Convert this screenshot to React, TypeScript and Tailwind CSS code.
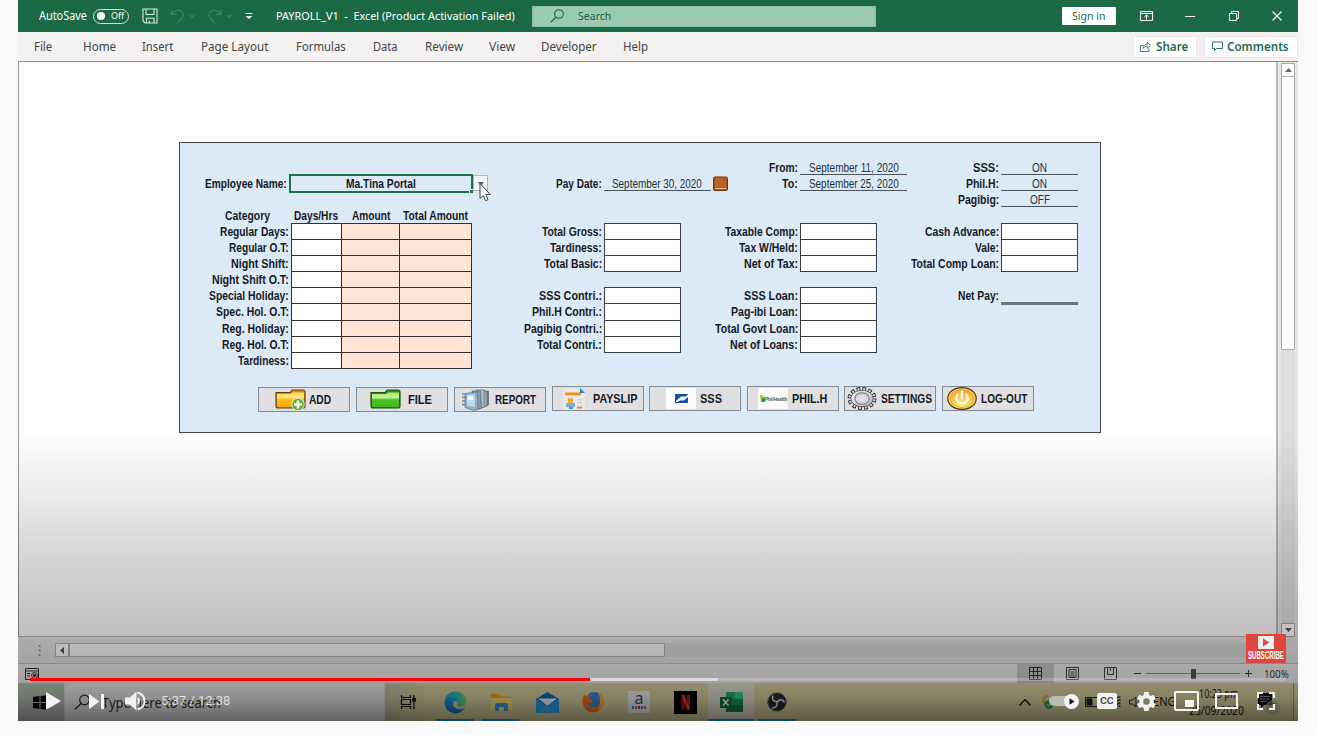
import { useLayoutEffect, useRef, useState } from "react";
import type { ReactNode } from "react";

const UI = "font-['Noto_Sans','Open_Sans',sans-serif]";
const ARIAL = "font-['Liberation_Sans',sans-serif]";

/* Condenses or widens one line of text to an exact width. */
function Fit({ w, className = "", children }: { w: number; className?: string; children: string }) {
  const ref = useRef<HTMLSpanElement>(null);
  const [scale, setScale] = useState(1);
  useLayoutEffect(() => {
    if (ref.current) setScale(w / ref.current.offsetWidth);
  }, [w]);
  return (
    <span className={`block shrink-0 whitespace-nowrap ${className}`} style={{ width: w }}>
      <span ref={ref} className="inline-block origin-left" style={{ transform: `scaleX(${scale})` }}>
        {children}
      </span>
    </span>
  );
}

function TitleBar() {
  return (
    <div className={`flex h-8 shrink-0 items-center bg-[#1b6a45] text-[12px] leading-4 text-white ${UI}`}>
      <Fit w={48} className="ml-[21px]">AutoSave</Fit>
      <div className="ml-[6px] flex h-[15px] w-9 items-center rounded-full border border-[#cfe3d8] pl-[3px]">
        <span className="size-2 rounded-full bg-white" />
        <Fit w={13} className="ml-[6px] text-[9.5px]">Off</Fit>
      </div>
      <svg className="ml-[13px] h-4 w-[16px]" viewBox="0 0 16 16" fill="none" stroke="#d8e9e0" strokeWidth="1.1">
        <path d="M1 1h14v14H3l-2-2zM4 1v5.500h8V1M4.500 15v-4.700H12V15M7.300 12.500V15" />
      </svg>
      <svg className="ml-3 h-4 w-[62px]" viewBox="0 0 62 16" fill="none" stroke="#3f8463" strokeWidth="1.2">
        <path d="M1.500 1.500v5h5M1.800 6.200C5 2 9 1.400 11.700 3.500c3.400 3 1.600 6-4.500 11.500M20 7l2.300 2.200L24.600 7M51 1.500v5h-5M50.700 6.200C47.500 2 43.500 1.400 40.800 3.500c-3.400 3-1.600 6 4 11.500M57 7l2.300 2.200L61.600 7" />
      </svg>
      <svg className="ml-[13px] h-2 w-2" viewBox="0 0 8 8" fill="#e9f3ee"><path d="M.5 1h7v1h-7zM.5 4h7L4 7z" /></svg>
      <Fit w={239} className="ml-[23px] text-[11.5px]">{"PAYROLL_V1\u00a0 -\u00a0 Excel (Product Activation Failed)"}</Fit>
      <div className="ml-[17px] flex h-[21px] w-[344px] items-center border border-[#8cc0a6] bg-[#9bcab3] pl-[17px] text-[#245c41]">
        <svg className="size-[14px]" viewBox="0 0 14 14" fill="none" stroke="#245c41" strokeWidth="1.1"><circle cx="9" cy="5" r="4.3" /><path d="M6 8 .6 13.4" /></svg>
        <Fit w={33} className="ml-[14px] text-[11.5px]">Search</Fit>
      </div>
      <div className="ml-[186px] flex h-[18px] w-[54px] items-center justify-center rounded-[1px] bg-white text-[#1b6a45]">
        <Fit w={34} className="text-[11.5px]">Sign in</Fit>
      </div>
      <svg className="ml-6 h-[10px] w-[13px]" viewBox="0 0 13 10" fill="none" stroke="white"><path d="M.5.5h12v9H.5zM.5 2.500h12M6.500 8.500V4M4.300 6 6.500 4l2.200 2" /></svg>
      <span className="ml-8 h-px w-[10px] bg-white" />
      <svg className="ml-[34px] size-[10px]" viewBox="0 0 10 10" fill="none" stroke="white"><path d="M.5 2.500h7v7h-7zM2.500 2.500v-2h7v7h-2" /></svg>
      <svg className="ml-[33px] size-[10px]" viewBox="0 0 10 10" stroke="white" strokeWidth="1.1"><path d="m.5.5 9 9m0-9-9 9" /></svg>
    </div>
  );
}

const MENU: [string, number, string][] = [
  ["File", 18, "w-[49px]"],
  ["Home", 33, "w-[59px]"],
  ["Insert", 31, "w-[59px]"],
  ["Page Layout", 67, "w-[95px]"],
  ["Formulas", 50, "w-[77px]"],
  ["Data", 25, "w-[52px]"],
  ["Review", 38, "w-[64px]"],
  ["View", 26, "w-[52px]"],
  ["Developer", 56, "w-[82px]"],
  ["Help", 25, "w-[25px]"],
];

function Ribbon() {
  return (
    <div className={`flex h-[30px] shrink-0 items-center border-b border-[#8f8b8b] bg-[#f3f2f1] pl-4 text-[12px] leading-4 text-[#444] ${UI}`}>
      {MENU.map(([name, w, cell]) => (
        <div key={name} className={`shrink-0 ${cell}`}><Fit w={w}>{name}</Fit></div>
      ))}
      <div className="mr-px ml-auto flex gap-[9px] font-semibold text-[#1f6a50]">
        <div className="flex h-5 w-[62px] items-center bg-white pl-[6px] shadow-[0_0_1px_#bbb]">
          <svg className="size-[11px]" viewBox="0 0 11 11" fill="none" stroke="#2b7559" strokeWidth=".9"><path d="M3.500 4.500h-3v6h8.500V7.500M3 7.500c.3-3 2-4.200 4.300-4.200V1l3.200 3.400-3.200 3V5.200C5.300 5.200 4 6 3 7.500z" /></svg>
          <Fit w={32} className="ml-[5px]">Share</Fit>
        </div>
        <div className="flex h-5 w-[92px] items-center bg-white pl-[7px] shadow-[0_0_1px_#bbb]">
          <svg className="size-[11px]" viewBox="0 0 11 11" fill="none" stroke="#2b7559"><path d="M.5 1h10v6.500h-6L2.500 9.700V7.500h-2z" /></svg>
          <Fit w={62} className="ml-[4px]">Comments</Fit>
        </div>
      </div>
    </div>
  );
}

type Entry = [string, number];

/* A run of labels with a ruled box beside each one. */
function BoxRows({ rows, label, tall = false }: { rows: Entry[]; label: string; tall?: boolean }) {
  return (
    <div className="flex flex-col">
      {rows.map(([name, w], i) => (
        <div key={name} className={`flex ${tall && i === 1 ? "h-[17px]" : "h-4"}`}>
          <div className={`flex shrink-0 items-center justify-end pt-px pr-[2px] ${label}`}><Fit w={w}>{name}</Fit></div>
          <div className={`w-[77px] border-x border-t border-[#3b3f42] bg-white ${i === rows.length - 1 ? "-mb-px border-b" : ""}`} />
        </div>
      ))}
    </div>
  );
}

function LineRow({ name, w, label, line, value, vw }: { name: string; w: number; label: string; line: string; value: string; vw: number }) {
  return (
    <div className="flex h-4">
      <div className={`flex shrink-0 items-center justify-end pt-px pr-[2px] ${label}`}><Fit w={w}>{name}</Fit></div>
      <div className={`flex shrink-0 items-center justify-center border-b border-[#4b5358] pt-[2px] font-normal text-[#26323c] ${line}`}>
        <Fit w={vw}>{value}</Fit>
      </div>
    </div>
  );
}

const CATEGORIES: Entry[] = [
  ["Regular Days:", 69], ["Regular O.T:", 60], ["Night Shift:", 58], ["Night Shift O.T:", 77], ["Special Holiday:", 80],
  ["Spec. Hol. O.T:", 73], ["Reg. Holiday:", 67], ["Reg. Hol. O.T:", 67], ["Tardiness:", 51],
];

function CategoryTable() {
  return (
    <div className="flex w-[311px] shrink-0 flex-col pt-8">
      <div className="flex h-4 items-center">
        <Fit w={82} className="ml-[25px] pt-px">Employee Name:</Fit>
        <div className="relative ml-[2px] flex h-[19px] w-[184px] shrink-0 items-center justify-center border-2 border-[#217346] pt-px">
          <Fit w={70}>Ma.Tina Portal</Fit>
          <span className="absolute -right-[3px] -bottom-[3px] size-[5px] border border-[#dce9f6] bg-[#217346]" />
        </div>
        <div className="relative h-4 w-[15px] shrink-0 border border-[#b5b5b5] bg-[#f4f5f6]">
          <svg className="absolute top-1 left-1 h-[25px] w-[13px]" viewBox="0 0 13 25">
            <path d="M0 2h6L3 5.500z" fill="#555" />
            <path d="M2 3.500v15l3.300-3 2.200 5.200 2.500-1-2.200-5.200h4.500z" fill="white" stroke="#26303b" strokeWidth=".9" />
          </svg>
        </div>
      </div>
      <div className="mt-4 flex h-4 items-center pt-px">
        <Fit w={45} className="ml-[45px]">Category</Fit>
        <Fit w={44} className="ml-[24px]">Days/Hrs</Fit>
        <Fit w={38} className="ml-[14px]">Amount</Fit>
        <Fit w={65} className="ml-[13px]">Total Amount</Fit>
      </div>
      {CATEGORIES.map(([name, w], i) => {
        const last = i === CATEGORIES.length - 1 ? "-mb-px border-b" : "";
        return (
          <div key={name} className={`flex ${i === 5 ? "h-[17px]" : "h-4"}`}>
            <div className="flex w-[111px] shrink-0 items-center justify-end pt-px pr-[2px]"><Fit w={w}>{name}</Fit></div>
            <div className={`w-[50px] border-t border-l border-[#332f2d] bg-white ${last}`} />
            <div className={`w-[58px] border-t border-l border-[#332f2d] bg-[#fee4d5] ${last}`} />
            <div className={`w-[73px] border-x border-t border-[#332f2d] bg-[#fee4d5] ${last}`} />
          </div>
        );
      })}
    </div>
  );
}

function FolderIcon({ green = false }: { green?: boolean }) {
  return (
    <svg className="h-[22px] w-[31px] shrink-0" viewBox="0 0 31 22">
      <defs>
        <linearGradient id={green ? "fg" : "fy"} x1="0" y1="0" x2="0" y2="1">
          <stop offset="0" stopColor={green ? "#a5e86a" : "#ffdf62"} /><stop offset=".35" stopColor={green ? "#c6f09a" : "#ffe27a"} /><stop offset=".5" stopColor={green ? "#4fbf26" : "#fdbd19"} /><stop offset="1" stopColor={green ? "#43b91f" : "#f7a60f"} />
        </linearGradient>
      </defs>
      <path d="M1 3.500h14l2-2.500h11.500q1.500 0 1.500 2V17q0 2-2 2H3q-2 0-2-2z" fill={green ? "#239018" : "#e8890f"} stroke={green ? "#1f5216" : "#5e4216"} strokeWidth="1.2" />
      <path d="M2 5h14l2-1.500h11V16q0 2-2 2H4q-2 0-2-2z" fill={`url(#${green ? "fg" : "fy"})`} />
      {!green && (<><circle cx="23" cy="15.500" r="6.200" fill="#64ad3a" stroke="#e4eedd" /><path d="M23 11.500v8m-4-4h8" stroke="white" strokeWidth="2.500" /></>)}
    </svg>
  );
}

const ReportIcon = (
  <svg className="h-[22px] w-[29px] shrink-0" viewBox="0 0 29 22">
    <path d="m19 1 9 1v14l-6 3z" fill="#697985" /><path d="M20 2h6v15l-5 2z" fill="#9daab4" stroke="#56656f" strokeWidth=".7" />
    <path d="M15 1h8v17l-5 2z" fill="#b3c0c9" stroke="#5d6d78" strokeWidth=".7" />
    <path d="M11 2h8.500l1 17-5 2z" fill="#8799a7" stroke="#516371" strokeWidth=".7" /><path d="m4 4.500 12-1.500 1 17-4 1.500-9-3z" fill="#8fb4cf" stroke="#5f7f96" strokeWidth=".8" />
    <path d="m6 6 8-.8v13L6 16.500z" fill="#bcd8ea" /><path d="m7 7.500 5-.5v4l-5 .3z" fill="#f1f8fc" />
    <path d="M1 5h4M1 8.500h4M1 12h4M1 15.500h4" stroke="#77838b" strokeWidth="1.3" />
  </svg>
);
const PayslipIcon = (
  <svg className="h-[22px] w-[24px] shrink-0" viewBox="0 0 24 22">
    <path d="M1 1h18l4 4v17H1z" fill="#e9e9e7" /><path d="M3 4.500h16v2.800H3z" fill="#f08c22" /><path d="m18 0 5 5h-5z" fill="#2588bb" />
    <path d="M6 10h2v1h1v-1h2v5H6z" fill="#f4a633" /><path d="M4 15h9v4H4z" fill="#76b1dc" /><path d="M7 19h4v2H7z" fill="#4f94ca" />
    <path d="M15 12h5M15 14.500h5" stroke="#c5c7c9" /><path d="M15 19.500h5" stroke="#ed812e" strokeWidth="2" />
  </svg>
);
const SssIcon = (
  <svg className="h-[21px] w-[30px] shrink-0" viewBox="0 0 30 21">
    <path d="M0 0h30v21H0z" fill="#fbfbfc" /><path d="M9 6h13v9H9z" fill="#174f9e" /><path d="m10 13 5-4.500h4.500L22 6.500V9l-4 3.500h-4L12 14h-2z" fill="#e8f2fb" />
  </svg>
);
const PhilIcon = (
  <div className="flex h-[21px] w-[30px] shrink-0 items-center bg-[#fafafa] pl-[2px]">
    <svg className="h-2 w-[5px]" viewBox="0 0 5 8"><path d="M0 0h2l1 2 2-1v6H1z" fill="#9ac22a" /><path d="M2 3h3v4H2z" fill="#45902d" /></svg>
    <Fit w={22} className="text-[5px] leading-[6px] text-[#46574a]">PhilHealth</Fit>
  </div>
);
const GearIcon = (
  <svg className="h-[23px] w-[30px] shrink-0" viewBox="0 0 30 23">
    <defs><linearGradient id="gm" x1="0" y1="0" x2="1" y2="1"><stop offset="0" stopColor="#f3f3f3" /><stop offset="1" stopColor="#b1b2b5" /></linearGradient></defs>
    <ellipse cx="15" cy="11.500" rx="12.500" ry="9.500" fill="none" stroke="#222" strokeWidth="4" strokeDasharray="3.600 2.200" />
    <ellipse cx="15" cy="11.500" rx="11.200" ry="8.300" fill="url(#gm)" stroke="#333" strokeWidth=".7" />
    <ellipse cx="15" cy="11.500" rx="12.500" ry="9.500" fill="none" stroke="#d8d8d8" strokeWidth="2.300" strokeDasharray="2 3.800" strokeDashoffset="-.8" />
    <ellipse cx="15" cy="11.500" rx="7" ry="5.800" fill="#ececed" stroke="#8c8e91" strokeWidth="1.400" />
    <ellipse cx="15" cy="11.500" rx="4.800" ry="4" fill="#dedee0" stroke="#b5b5b5" strokeWidth=".6" />
  </svg>
);
const PowerIcon = (
  <svg className="h-[23px] w-[30px] shrink-0" viewBox="0 0 30 23">
    <defs><radialGradient id="pw" cy=".9" r=".8"><stop offset="0" stopColor="#ffee6e" /><stop offset="1" stopColor="#fbab2a" /></radialGradient></defs>
    <ellipse cx="15" cy="11.500" rx="14.200" ry="10.900" fill="#ffd76b" stroke="#453717" strokeWidth="1.200" />
    <ellipse cx="15" cy="11.500" rx="12" ry="9" fill="url(#pw)" stroke="#d9922b" strokeWidth=".6" />
    <path d="M10.500 7.500q-3 6 1.500 8 3 1.500 6 0 4.500-2 1.500-8M15 4.500v7" fill="none" stroke="#fffaf0" strokeWidth="2.500" strokeLinecap="round" />
  </svg>
);

const BUTTONS: [string, number, string, string, ReactNode][] = [
  ["ADD", 22, "pl-4", "ml-[3px]", <FolderIcon />],
  ["FILE", 24, "pl-[13px]", "ml-[7px]", <FolderIcon green />],
  ["REPORT", 41, "pl-[6px] ml-px -mr-px", "ml-[5px]", ReportIcon],
  ["PAYSLIP", 44, "pl-[9px] ml-px -mr-px -mt-px", "ml-[7px]", PayslipIcon],
  ["SSS", 22, "pl-4 -mt-px", "ml-[4px]", SssIcon],
  ["PHIL.H", 35, "pl-[10px] ml-px -mr-px -mt-px", "ml-[4px]", PhilIcon],
  ["SETTINGS", 51, "pl-[2px] -mt-px", "ml-[4px]", GearIcon],
  ["LOG-OUT", 46, "pl-[4px] -mt-px", "ml-[4px]", PowerIcon],
];

function PayrollPanel() {
  const b = "w-[113px]";
  const c = "w-[100px]";
  const d = "w-[101px]";
  return (
    <div className={`mt-20 ml-40 flex h-[291px] w-[922px] flex-col border border-[#3f484f] bg-[#dce9f6] text-[12px] leading-4 font-bold text-[#15191d] ${ARIAL}`}>
      <div className="flex h-[227px] shrink-0">
        <CategoryTable />
        <div className="flex w-[209px] shrink-0 flex-col pt-8">
          <div className="flex">
            <LineRow name="Pay Date:" w={46} label={b} line="w-[107px] pr-px" value="September 30, 2020" vw={90} />
            <svg className="ml-[2px] h-4 w-[15px] shrink-0" viewBox="0 0 15 16">
              <rect x=".5" y="2" width="14" height="13.500" rx="1.500" fill="#a95418" stroke="#6f3514" /><path d="M2 3h11v9H2z" fill="#b9642a" /><path d="M2 13.500h11.500" stroke="#e9c09a" /><path d="M10.500 2h2v4l-1-1-1 1z" fill="#d5351e" />
            </svg>
          </div>
          <div className="h-8" />
          <BoxRows label={b} rows={[["Total Gross:", 60], ["Tardiness:", 52], ["Total Basic:", 58]]} />
          <div className="h-4" />
          <BoxRows label={b} tall rows={[["SSS Contri.:", 63], ["Phil.H Contri.:", 70], ["Pagibig Contri.:", 78], ["Total Contri.:", 65]]} />
        </div>
        <div className="flex w-[200px] shrink-0 flex-col pt-4">
          <LineRow name="From:" w={29} label={c} line="w-[107px]" value="September 11, 2020" vw={90} />
          <LineRow name="To:" w={16} label={c} line="w-[107px]" value="September 25, 2020" vw={90} />
          <div className="h-8" />
          <BoxRows label={c} rows={[["Taxable Comp:", 73], ["Tax W/Held:", 59], ["Net of Tax:", 54]]} />
          <div className="h-4" />
          <BoxRows label={c} tall rows={[["SSS Loan:", 54], ["Pag-ibi Loan:", 67], ["Total Govt Loan:", 83], ["Net of Loans:", 68]]} />
        </div>
        <div className="flex shrink-0 flex-col pt-4">
          <LineRow name="SSS:" w={26} label={d} line="w-[77px]" value="ON" vw={15} />
          <LineRow name="Phil.H:" w={33} label={d} line="w-[77px]" value="ON" vw={15} />
          <LineRow name="Pagibig:" w={41} label={d} line="w-[77px]" value="OFF" vw={20} />
          <div className="h-4" />
          <BoxRows label={d} rows={[["Cash Advance:", 74], ["Vale:", 24], ["Total Comp Loan:", 88]]} />
          <div className="h-4" />
          <div className="flex h-4">
            <div className="flex w-[101px] items-center justify-end pt-px pr-[2px]"><Fit w={41}>Net Pay:</Fit></div>
            <div className="-mb-[2px] w-[77px] border-b-[3px] border-[#6b777c]" />
          </div>
        </div>
      </div>
      <div className="mt-[17px] ml-[78px] flex gap-[5.7px]">
        {BUTTONS.map(([name, w, pad, gap, icon]) => (
          <div key={name} className={`flex h-[25px] w-[92px] shrink-0 items-center border border-[#858b91] bg-[#e0e0e2] ${pad}`}>
            {icon}
            <Fit w={w} className={`pt-px ${gap}`}>{name}</Fit>
          </div>
        ))}
      </div>
    </div>
  );
}

function Sheet() {
  return (
    <div className="flex h-[575px] shrink-0 bg-[#e8e8e8]">
      <div className="w-[1260px] shrink-0 border-r-2 border-b border-l border-r-[#b9b9b9] border-b-[#b5b5b5] border-l-[#999] bg-white">
        <PayrollPanel />
      </div>
      <div className="ml-[3px] flex w-[14px] flex-col pt-px">
        <div className="flex h-[14px] items-center justify-center border border-[#aaa] bg-white"><svg className="h-1 w-[7px]" viewBox="0 0 7 4"><path d="M0 4h7L3.500 0z" fill="#666" /></svg></div>
        <div className="h-[273px] border border-t-0 border-[#aaa] bg-white" />
        <div className="flex-1 bg-[#dedede]" />
        <div className="flex h-[14px] items-center justify-center border border-[#aaa] bg-white"><svg className="h-1 w-[7px]" viewBox="0 0 7 4"><path d="M0 0h7L3.500 4z" fill="#555" /></svg></div>
      </div>
    </div>
  );
}

function BottomBars() {
  return (
    <>
      <div className="flex h-[27px] shrink-0 items-center border-b border-[#c2c2c2] bg-[#e5e5e5] pl-5">
        <svg className="h-[11px] w-[3px]" viewBox="0 0 3 11" fill="#999"><path d="M.5 0h2v2h-2zM.5 4.500h2v2h-2zM.5 9h2v2h-2z" /></svg>
        <div className="ml-[14px] flex h-[14px] w-[1205px] bg-[#dadada]">
          <div className="flex w-[14px] items-center justify-center border border-[#b3b3b3] bg-white"><svg className="h-[7px] w-1" viewBox="0 0 4 7"><path d="M4 0v7L0 3.500z" fill="#555" /></svg></div>
          <div className="w-[596px] border border-[#b3b3b3] bg-[#fcfcfc]" />
        </div>
      </div>
      <div className={`flex h-[19px] shrink-0 items-center bg-[#f0eeed] text-[10.5px] text-[#444] ${UI}`}>
        <svg className="ml-[7px] h-3 w-[14px]" viewBox="0 0 14 12" fill="none" stroke="#333"><path d="M.5.5h13v11H.5zM.5 3h13M2 5.500h3M2 8h3" /><circle cx="9.500" cy="7.500" r="3" fill="#eee" /><circle cx="9.500" cy="7.500" r="1.200" fill="#333" /></svg>
        <div className="ml-[978px] flex h-[19px] w-[37px] items-center justify-center bg-[#cac9c8]">
          <svg className="size-[13px]" viewBox="0 0 13 13" fill="none" stroke="#333"><path d="M.5.5h12v12H.5zM4.500 0v13M8.500 0v13M0 4.500h13M0 8.500h13" /></svg>
        </div>
        <svg className="ml-[12px] size-[13px]" viewBox="0 0 13 13" fill="none" stroke="#444"><path d="M.5.5h12v12H.5zM3 2.500h7v8H3zM4.500 5h4M4.500 7h4M4.500 9h4" /></svg>
        <svg className="ml-[25px] size-[13px]" viewBox="0 0 13 13" fill="none" stroke="#444"><path d="M.5.5h12v12H.5zM3.500 0v7.500h6M9.500 7.500V0M6.500 0v4" /></svg>
        <span className="ml-[17px] h-px w-[7px] bg-[#444]" />
        <div className="ml-[5px] flex h-3 w-[94px] items-center justify-center bg-[linear-gradient(#888,#888)] bg-[length:100%_1px] bg-center bg-no-repeat"><span className="h-[10px] w-[5px] bg-[#555]" /></div>
        <svg className="ml-[5px] size-[7px]" viewBox="0 0 7 7" stroke="#444"><path d="M3.500 0v7M0 3.500h7" /></svg>
        <Fit w={25} className="ml-[12px] pt-[2px]">100%</Fit>
      </div>
    </>
  );
}

function TaskIcon({ children, className = "", bar = "" }: { children: ReactNode; className?: string; bar?: string }) {
  return (
    <div className={`flex h-[38px] w-[46px] shrink-0 flex-col items-center ${className}`}>
      <div className="flex h-9 items-center pt-[2px]">{children}</div>
      <div className={`h-[2px] ${bar}`} />
    </div>
  );
}

function Taskbar() {
  return (
    <div className={`flex h-[38px] shrink-0 bg-[#ddd6a2] ${UI}`}>
      <div className="flex w-[46px] shrink-0 items-center bg-[#b5c5b2] pl-[15px]">
        <svg className="size-[15px]" viewBox="0 0 15 15"><path d="m0 2 6.500-1v6H0zM7.500.9 15 0v7H7.500zM0 8h6.500v6L0 13zM7.500 8H15v7l-7.500-1z" fill="#050505" /></svg>
      </div>
      <div className="flex w-[321px] shrink-0 items-center border-x border-[#ddd] bg-[#eeeeee] pl-[9px] text-[14px] text-[#333]">
        <svg className="size-4" viewBox="0 0 16 16" fill="none" stroke="#222" strokeWidth="1.2"><circle cx="10.500" cy="6" r="4.800" /><path d="M7 9.500.8 15.500" /></svg>
        <Fit w={119} className="ml-[12px]">Type here to search</Fit>
      </div>
      <TaskIcon className="bg-[linear-gradient(90deg,#c3c2a0,#ddd6a2)]">
        <svg className="size-4" viewBox="0 0 16 16" fill="none" stroke="#111" strokeWidth="1.2"><path d="M1.500 1v2.500h9V1M1.500 15v-2.500h9V15M1.500 5.500h9v5h-9zM14 1v14" /><path d="M12.700 4.500h2.600V7h-2.600z" fill="#111" /></svg>
      </TaskIcon>
      <TaskIcon bar="w-[38px] bg-[#11a0ff]" className="ml-px">
        <svg className="size-[23px]" viewBox="0 0 24 24">
          <defs>
            <linearGradient id="ed" x1="0" x2="1" y1=".5" y2=".5"><stop offset="0" stopColor="#1fa8ec" /><stop offset=".6" stopColor="#36c7c0" /><stop offset="1" stopColor="#76dd5c" /></linearGradient>
            <linearGradient id="eb" x1="0" x2="0" y1="0" y2="1"><stop offset="0" stopColor="#1fa8ec" /><stop offset="1" stopColor="#1a66c4" /></linearGradient>
          </defs>
          <path d="M.6 12C.6 5 5.500.6 12 .6c7 0 11.400 4.900 11.400 9.800 0 4-3 6.100-6.500 6.100-3.300 0-4.400-1-3-2.900 1-2.600-.9-4.600-3.900-4.600-5 0-9 1-9.400 3z" fill="url(#ed)" />
          <path d="M.6 12C1.500 8 6 5.500 9.500 6.500c3 .9 4.500 2.500 4.700 4.500-1.700-1.700-4-1-4.600 1.200-.9 4.300 3.900 7.800 8.400 6.800 2-.4 3.200-1.300 3.900-1.500-1.900 3.500-5.600 5.900-9.900 5.900C5.500 23.400.6 18.500.6 12z" fill="url(#eb)" />
        </svg>
      </TaskIcon>
      <TaskIcon bar="w-[38px] bg-[linear-gradient(90deg,#11a0ff_82%,#5cb3e8_82%)]">
        <svg className="h-[19px] w-[21px]" viewBox="0 0 21 19"><path d="M0 1h8l2 2.500H21V17H0z" fill="#edaf1c" /><path d="M0 5h21v12H0z" fill="#ffe07e" /><path d="M4 18v-6q0-2 2-2h9q2 0 2 2v6h-4v-4H8v4z" fill="#3f9be6" /></svg>
      </TaskIcon>
      <TaskIcon>
        <svg className="h-[21px] w-[23px]" viewBox="0 0 23 21"><path d="M0 7 11.500 0 23 7v14H0z" fill="#0f6cc0" /><path d="M2 6.500h19L11.500 14z" fill="#fafcff" /><path d="M0 7l11.500 7L0 21zM23 7l-11.500 7L23 21z" fill="#2aa5f2" /><path d="m0 21 11.500-8L23 21z" fill="#3db4f7" /></svg>
      </TaskIcon>
      <TaskIcon>
        <svg className="size-[22px]" viewBox="0 0 22 22">
          <circle cx="12" cy="9.500" r="8.500" fill="#3a8ddb" /><path d="M2 3q-2 5-1.500 9Q2 21 11 21.500q9-.5 10.500-9Q22 6 18 2.500q2 5 0 7.500 0 6-6 6-5 0-6-4l5-.5q1-1.500-3-3.500-1-2 1-4Q6 4 5 5 3 5 2 3z" fill="#ff7421" /><path d="M16 1q5 4 5.500 9-1 9-8 11 5-4 4.500-10 0-6-2-10z" fill="#ffb437" />
        </svg>
      </TaskIcon>
      <TaskIcon>
        <div className="flex size-[22px] flex-col items-center bg-[#f1f2f5] text-[16px] leading-[14px] text-[#4d4d4d]">a<svg className="mt-px h-[3px] w-[14px]" viewBox="0 0 14 3"><path d="M0 0h2v3H0zM9 0h2v3H9z" fill="#318fcf" /><path d="M3 0h2v3H3zM12 0h2v3h-2z" fill="#dc553d" /><path d="M6 0h2v3H6z" fill="#555" /></svg></div>
      </TaskIcon>
      <TaskIcon>
        <svg className="h-[23px] w-[23px] bg-black" viewBox="0 0 23 23"><path d="M7.500 4h3v15h-3zM13 4h3v15h-3z" fill="#b8141b" /><path d="M7.500 4h3L16 19h-3z" fill="#ff2f36" /></svg>
      </TaskIcon>
      <TaskIcon className="bg-[#e4e3d4]" bar="w-[46px] bg-[#11a0ff]">
        <svg className="h-5 w-[23px]" viewBox="0 0 23 20"><path d="M6 0h17v20H6z" fill="#1c9b5c" /><path d="M14.500 0H23v6.500h-8.500z" fill="#3bd48e" /><path d="M6 0h8.500v6.500H6z" fill="#25b573" /><path d="M6 13h17v7H6z" fill="#187a48" /><path d="M0 5h11.500v11H0z" fill="#10743f" /><path d="m3 7.500 5.500 6m0-6-5.500 6" stroke="white" strokeWidth="1.7" /></svg>
      </TaskIcon>
      <TaskIcon bar="w-[38px] bg-[#11a0ff]">
        <svg className="size-5" viewBox="0 0 20 20"><circle cx="10" cy="10" r="9.300" fill="#2a2a31" stroke="#777" /><g fill="none" stroke="#e8e8e8" strokeWidth="1.6"><path d="M10 10Q4 9 6 3.500M10 10q4.500-4.500 7.500.5M10 10q1 6-5 6" /></g></svg>
      </TaskIcon>
      <div className="ml-[219px] flex items-center text-[12px] text-[#222]">
        <svg className="h-[7px] w-3" viewBox="0 0 12 7" fill="none" stroke="#111" strokeWidth="1.3"><path d="m.5 6.500 5.500-6 5.500 6" /></svg>
        <svg className="ml-[9px] h-4 w-[15px]" viewBox="0 0 15 16"><path d="M8 2a5 5 0 1 0 1 10" fill="none" stroke="#e9a832" strokeWidth="2.5" /><circle cx="9" cy="10.500" r="4.500" fill="#2e9b65" /><path d="m7 10.500 1.500 1.500 2.700-3" stroke="white" fill="none" /></svg>
        <svg className="ml-[30px] h-[10px] w-4" viewBox="0 0 16 10" fill="none" stroke="#222"><path d="M.5.5h14v9H.5z" /><path d="M2 2h5v6H2z" fill="#222" /></svg>
        <svg className="ml-[7px] h-3 w-[13px]" viewBox="0 0 13 12" fill="none" stroke="#333" strokeWidth="1.3"><path d="M12.500 1Q6 1 1 7M12.500 4Q8 4 4 9M12.500 7Q9 7 7 11M12.500 10h-2" /></svg>
        <svg className="ml-[8px] h-3 w-[16px]" viewBox="0 0 16 12" fill="none" stroke="#222"><path d="M.5 4h3L7 1v10L3.500 8h-3zM9.500 3.500q2 2.500 0 5M12 2q3 4 0 8" /></svg>
        <Fit w={23} className="ml-[8px]">ENG</Fit>
        <div className="ml-[12px] flex w-[56px] flex-col items-center leading-[17px]">
          <Fit w={39} className="ml-1">10:23 pm</Fit>
          <Fit w={55}>25/09/2020</Fit>
        </div>
        <div className="relative ml-[13px] h-6 w-6">
          <svg className="size-6" viewBox="0 0 24 24"><path d="M1 3h14v12H7l-3 3v-3H1z" fill="#111" /><path d="M3 6.500h10M3 9h10M3 11.500h7" stroke="#888" /><circle cx="16" cy="18" r="7" fill="#999" fillOpacity=".5" stroke="#bbb" /></svg>
          <span className="absolute top-[10px] left-[14px] text-[9px] text-[#222]">1</span>
        </div>
      </div>
      <div className="ml-auto w-[5px] border-l border-[#99926e]" />
    </div>
  );
}

function PlayerControls() {
  return (
    <div className="absolute inset-x-3 bottom-0 flex h-[43px] flex-col">
      <div className="flex h-[3px] bg-white/20">
        <div className="w-[560px] bg-[#f00]" />
        <div className="w-32 bg-white/50" />
      </div>
      <div className="flex h-10 items-center pl-4 text-[#eee]">
        <svg className="h-[18px] w-[15px]" viewBox="0 0 15 18"><path d="M0 0v18l15-9z" fill="#f2f2f2" /></svg>
        <svg className="ml-7 h-[15px] w-[15px]" viewBox="0 0 15 15"><path d="M0 0v15l10.500-7.500zM12 0h3v15h-3z" fill="#f2f2f2" /></svg>
        <svg className="ml-[21px] h-[20px] w-[21px]" viewBox="0 0 21 20"><path d="M0 6.500v7h5l6.500 6V.5L5 6.500zM12.500 5.500v9q5-4.500 0-9z" fill="#f2f2f2" /><path d="M12.500 1.500q7 2 7 8.500t-7 8.500" fill="none" stroke="#f2f2f2" strokeWidth="2" /></svg>
        <Fit w={69} className="ml-[15px] font-['Roboto',sans-serif] text-[13px] text-[#dedede]">5:37 / 12:38</Fit>
        <div className="mr-[11px] ml-auto flex items-center">
          <div className="flex h-[10px] w-[29px] items-center justify-end rounded-full bg-[#bcbbb0]"><svg className="-mr-px size-[15px]" viewBox="0 0 15 15"><circle cx="7.500" cy="7.500" r="7.500" fill="#f4f4f4" /><path d="m5.500 4.200 5 3.300-5 3.300z" fill="#111" /></svg></div>
          <div className="ml-[19px] flex h-4 w-5 items-center justify-center rounded-[2px] bg-[#f2f2f2] font-['Roboto',sans-serif] text-[9px] leading-none font-bold text-[#55523f]"><Fit w={14}>CC</Fit></div>
          <svg className="ml-[20px] size-[19px]" viewBox="2 2 20 20" fill="#f2f2f2"><path fillRule="evenodd" d="m19.400 13 .1-1-.1-1 2.100-1.600c.2-.2.200-.4.100-.6l-2-3.500c-.1-.2-.4-.3-.6-.2l-2.500 1-1.700-1-.4-2.600c0-.300-.2-.5-.5-.5h-4c-.3 0-.5.200-.5.500L9 5.100l-1.700 1-2.500-1c-.2-.1-.5 0-.6.2l-2 3.500c-.1.200-.1.500.1.600L4.500 11l-.1 1 .1 1-2.200 1.600c-.2.200-.2.400-.1.600l2 3.500c.1.200.4.300.6.200l2.500-1 1.700 1 .4 2.600c0 .300.200.5.500.5h4c.3 0 .5-.2.5-.5l.4-2.600 1.700-1 2.500 1c.2.100.5 0 .6-.2l2-3.500c.1-.2.100-.4-.1-.6zM12 15.500a3.500 3.500 0 1 1 0-7 3.500 3.500 0 0 1 0 7z" /></svg>
          <svg className="ml-[18px] h-5 w-[25px]" viewBox="0 0 25 20"><rect x="1" y="1" width="23" height="18" rx="1" fill="none" stroke="#f2f2f2" strokeWidth="2" /><path d="M11 9h9v7h-9z" fill="#f2f2f2" /></svg>
          <svg className="ml-4 h-4 w-[23px]" viewBox="0 0 23 16"><path d="M1 1h21v14H1z" fill="none" stroke="#f2f2f2" strokeWidth="2" /></svg>
          <svg className="ml-[19px] size-[18px]" viewBox="0 0 18 18"><path d="M1 6V1h5M12 1h5v5M17 12v5h-5M6 17H1v-5" fill="none" stroke="#f2f2f2" strokeWidth="2.2" /></svg>
        </div>
      </div>
    </div>
  );
}

export default function App() {
  return (
    <div className="h-[735px] w-[1317px] overflow-hidden bg-[#f9f9f9] pl-[18px]">
      <div className="relative flex h-[721px] w-[1280px] flex-col overflow-hidden bg-white">
        <TitleBar />
        <Ribbon />
        <Sheet />
        <BottomBars />
        <Taskbar />
        <div className="absolute inset-x-0 bottom-0 h-[301px] bg-[linear-gradient(to_bottom,transparent_10px,rgba(0,0,0,.08)_75px,rgba(0,0,0,.15)_125px,rgba(0,0,0,.2)_170px,rgba(0,0,0,.25)_216px,rgba(0,0,0,.31)_258px,rgba(0,0,0,.4)_278px,rgba(0,0,0,.58)_301px)]" />
        <div className={`absolute right-3 bottom-[58px] flex h-[29px] w-10 flex-col items-center bg-[#df4640] pt-[2px] font-bold text-white ${ARIAL}`}>
          <svg className="h-[13px] w-4" viewBox="0 0 16 13"><path d="M0 0h16v13H0z" fill="#eee" /><path d="M5 2.500v8l6.500-4z" fill="#df4640" /></svg>
          <Fit w={36} className="text-[11px] leading-[13px]">SUBSCRIBE</Fit>
        </div>
        <PlayerControls />
      </div>
    </div>
  );
}
